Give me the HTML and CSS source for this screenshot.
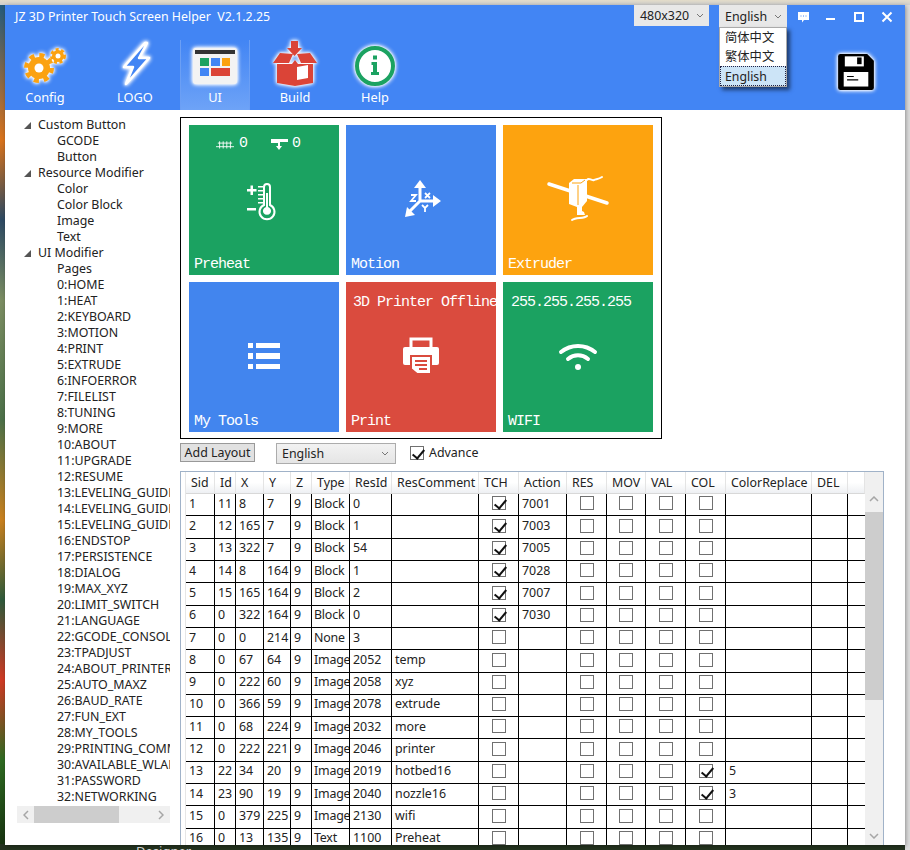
FILE: index.html
```html
<!DOCTYPE html>
<html lang="en">
<head>
<meta charset="utf-8">
<title>JZ 3D Printer Touch Screen Helper</title>
<link rel="stylesheet" href="styles.css">
</head>
<body>
<div class="desk-text">Designer</div>
<div class="window">
  <header class="header">
    <div class="titlebar">
      <div class="title">JZ 3D Printer Touch Screen Helper&nbsp; V2.1.2.25</div>
      <div class="top-controls">
        <div class="combo combo-res"><span>480x320</span><svg class="chev" viewBox="0 0 8 5"><path d="M1 1l3 3 3-3"/></svg></div>
        <div class="combo combo-lang"><span>English</span><svg class="chev" viewBox="0 0 8 5"><path d="M1 1l3 3 3-3"/></svg>
          <ul class="menu">
            <li>简体中文</li>
            <li>繁体中文</li>
            <li class="sel">English</li>
          </ul>
        </div>
        <div class="win-buttons">
          <svg class="wb" viewBox="0 0 12 12"><path class="fill-w" d="M1 1h11v8H7l-2 2.5V9H1z"/><path class="dots" d="M3.5 5h1M6 5h1M8.500 5h1"/></svg>
          <svg class="wb" viewBox="0 0 12 12"><path class="line-w" d="M1 8h9"/></svg>
          <svg class="wb" viewBox="0 0 12 12"><rect class="line-w" x="2" y="2" width="8" height="8"/></svg>
          <svg class="wb" viewBox="0 0 12 12"><path class="line-w" d="M1.500 1.500l9 9M10.500 1.500l-9 9"/></svg>
        </div>
      </div>
    </div>
    <nav class="nav">
      <div class="tab">
        <svg class="nav-icon" viewBox="0 0 46 40">
          <circle class="gear-teeth" cx="17" cy="22" r="12.500"/><circle class="gear" cx="17" cy="22" r="11"/><circle class="hole" cx="17" cy="22" r="4.500"/>
          <circle class="gear-teeth-s" cx="36" cy="10" r="6.500"/><circle class="gear" cx="36" cy="10" r="6"/><circle class="hole-s" cx="36" cy="10" r="2.500"/>
        </svg>
        <span>Config</span>
      </div>
      <div class="tab tab-logo">
        <svg class="nav-icon nav-bolt" viewBox="0 0 46 44"><path class="bolt" d="M33 1L12 25h9l-7 17 23-26H27l8-15z"/></svg>
        <span>LOGO</span>
      </div>
      <div class="tab tab-active">
        <svg class="nav-icon" viewBox="0 0 46 40">
          <rect class="ui-frame" x="1" y="2" width="44" height="36" rx="3"/>
          <rect class="ui-bar" x="3" y="4" width="40" height="4"/>
          <rect class="t-green" x="8" y="12" width="9" height="8"/><rect class="t-blue" x="19" y="12" width="9" height="8"/><rect class="t-orange" x="30" y="12" width="8" height="8"/>
          <rect class="t-blue" x="8" y="22" width="9" height="8"/><rect class="t-red" x="19" y="22" width="19" height="8"/>
        </svg>
        <span>UI</span>
      </div>
      <div class="tab">
        <svg class="nav-icon nav-build" viewBox="0 0 46 46">
          <path class="red" d="M19 0h7v7h4l-7.500 8L15 7h4z"/>
          <path class="red" d="M5 23h15l3 -4 3 4h15v19l-18 3-18-3z"/>
          <path class="red" d="M1 22l7-10 13 1-4 9zM45 22l-7-10-13 1 4 9z"/>
          <path class="white" d="M25 26l11-2v13l-11 2z"/>
        </svg>
        <span>Build</span>
      </div>
      <div class="tab">
        <svg class="nav-icon" viewBox="0 0 46 40">
          <circle class="help-ring" cx="23" cy="20" r="18"/>
          <path class="green" d="M21 9.500h4v4h-4zM19.500 16H25v10h2v3h-8v-3h2v-7h-1.500z"/>
        </svg>
        <span>Help</span>
      </div>
      <svg class="save" viewBox="0 0 34 34">
        <path class="black" d="M1 3a2 2 0 0 1 2-2h24l6 6v24a2 2 0 0 1-2 2H3a2 2 0 0 1-2-2z"/>
        <rect class="white" x="7" y="3" width="17" height="9"/><rect class="black" x="18" y="4" width="4" height="6"/>
        <rect class="white" x="6" y="17" width="22" height="13"/><path class="thin" d="M9 21h6M9 24h10"/>
      </svg>
    </nav>
  </header>
  <div class="content">
    <aside class="side">
      <div class="tree">
        <div class="node parent">Custom Button</div>
        <div class="node">GCODE</div>
        <div class="node">Button</div>
        <div class="node parent">Resource Modifier</div>
        <div class="node">Color</div>
        <div class="node">Color Block</div>
        <div class="node">Image</div>
        <div class="node">Text</div>
        <div class="node parent">UI Modifier</div>
        <div class="node">Pages</div>
        <div class="node">0:HOME</div>
        <div class="node">1:HEAT</div>
        <div class="node">2:KEYBOARD</div>
        <div class="node">3:MOTION</div>
        <div class="node">4:PRINT</div>
        <div class="node">5:EXTRUDE</div>
        <div class="node">6:INFOERROR</div>
        <div class="node">7:FILELIST</div>
        <div class="node">8:TUNING</div>
        <div class="node">9:MORE</div>
        <div class="node">10:ABOUT</div>
        <div class="node">11:UPGRADE</div>
        <div class="node">12:RESUME</div>
        <div class="node">13:LEVELING_GUIDE</div>
        <div class="node">14:LEVELING_GUIDE</div>
        <div class="node">15:LEVELING_GUIDE</div>
        <div class="node">16:ENDSTOP</div>
        <div class="node">17:PERSISTENCE</div>
        <div class="node">18:DIALOG</div>
        <div class="node">19:MAX_XYZ</div>
        <div class="node">20:LIMIT_SWITCH</div>
        <div class="node">21:LANGUAGE</div>
        <div class="node">22:GCODE_CONSOLE</div>
        <div class="node">23:TPADJUST</div>
        <div class="node">24:ABOUT_PRINTER</div>
        <div class="node">25:AUTO_MAXZ</div>
        <div class="node">26:BAUD_RATE</div>
        <div class="node">27:FUN_EXT</div>
        <div class="node">28:MY_TOOLS</div>
        <div class="node">29:PRINTING_COMMAND</div>
        <div class="node">30:AVAILABLE_WLAN</div>
        <div class="node">31:PASSWORD</div>
        <div class="node">32:NETWORKING</div>
      </div>
      <div class="hscroll">
        <svg class="sb-arrow" viewBox="0 0 6 10"><path d="M5 1L1 5l4 4"/></svg>
        <div class="hthumb"></div>
        <svg class="sb-arrow" viewBox="0 0 6 10"><path d="M1 1l4 4-4 4"/></svg>
      </div>
    </aside>
    <main class="main">
      <section class="preview">
        <div class="tile green-bg">
          <div class="status">
            <svg class="mini" viewBox="0 0 20 10"><path class="thin-w" d="M0 8h20M4 2v8M8 2v8M12 2v8M16 2v8M2 4h16"/></svg><span class="st-val">0</span>
            <svg class="mini mini-n" viewBox="0 0 17 12"><path class="fill-w" d="M0 1h17v3H9v4h2l-3 4-3-4h2V5H0z"/></svg><span>0</span>
          </div>
          <svg class="tile-icon" viewBox="0 0 40 40">
            <path class="stroke-w2" d="M20 8a3 3 0 0 1 6 0v18a7.500 7.500 0 1 1-6 0z"/>
            <path class="fill-w" d="M22 14h2v14a4 4 0 1 1-2 0zM3 10h3.500V6.500h2.500V10h3.500v2.500H9V16H6.500v-3.500H3zM3 29h9v2.500H3zM14 7h5v1.500h-5zM14 11h5v1.500h-5zM14 15h5v1.500h-5zM14 19h5v1.500h-5zM14 23h5v1.500h-5z"/>
          </svg>
          <div class="label">Preheat</div>
        </div>
        <div class="tile blue-bg">
          <svg class="tile-icon" viewBox="0 0 40 40">
            <path class="stroke-w3" d="M19 22V6M19 22h16M19 22L7 34"/>
            <path class="fill-w" d="M19 1l6 8H13zM40 22l-8 6V16zM4 38l2-10 8 8z"/>
            <path class="thin-w2" d="M10 16h5l-5 6h5M24 14l5 5M29 14l-5 5M21 26l3 3 3-3M24 29v4"/>
          </svg>
          <div class="label">Motion</div>
        </div>
        <div class="tile orange-bg">
          <svg class="tile-icon icon-ext" viewBox="0 0 60 46">
            <path class="stroke-w3r" d="M1 8l58 19"/>
            <path class="fill-w" d="M21 7l5-4h13v22l-5 6h-5l-8-3z"/>
            <path class="orange-line" d="M30 9v20M24 7h9l4-3"/>
            <path class="fill-w" d="M29 31h5v4l2 1 1 3H29z"/>
            <path class="stroke-w2" d="M24 44c4-3 12-1 15-4"/>
            <path class="stroke-w2" d="M39 4c2-3 4 1 7 0s5-1 8-3"/>
          </svg>
          <div class="label">Extruder</div>
        </div>
        <div class="tile blue-bg">
          <svg class="tile-icon" viewBox="0 0 40 40"><path class="fill-w" d="M4 7h5v5H4zM12 7h24v5H12zM4 17h5v6H4zM12 17h24v6H12zM4 28h5v5H4zM12 28h24v5H12z"/></svg>
          <div class="label">My Tools</div>
        </div>
        <div class="tile red-bg">
          <div class="top-text">3D Printer Offline</div>
          <svg class="tile-icon" viewBox="0 0 40 40">
            <path class="stroke-w3" d="M10 11V3h20v8"/>
            <rect class="fill-w" x="2" y="11" width="36" height="18" rx="2"/>
            <path class="paper" d="M10 20h20v18H16l-6-5z"/>
            <path class="red-line" d="M14 25h12M14 29h12M18 33h8"/>
          </svg>
          <div class="label">Print</div>
        </div>
        <div class="tile green-bg">
          <div class="top-text top-ip">255.255.255.255</div>
          <svg class="tile-icon" viewBox="0 0 40 40">
            <path class="stroke-w3c" d="M3 16c10-8 24-8 34 0M10 23c6-5 14-5 20 0"/><circle class="fill-w" cx="20" cy="31" r="3"/>
          </svg>
          <div class="label">WIFI</div>
        </div>
      </section>
      <div class="controls">
        <button class="add-btn">Add Layout</button>
        <div class="combo combo-layout"><span>English</span><svg class="chev" viewBox="0 0 8 5"><path d="M1 1l3 3 3-3"/></svg></div>
        <label class="adv"><i class="cb on"></i>Advance</label>
      </div>
      <div class="grid-frame">
        <div class="grid-wrap">
        <table class="grid">
          <colgroup>
            <col class="w29"><col class="w21"><col class="w28"><col class="w27"><col class="w21"><col class="w38"><col class="w42"><col class="w87"><col class="w40"><col class="w48"><col class="w40"><col class="w39"><col class="w40"><col class="w40"><col class="w86"><col class="w36"><col class="w17">
          </colgroup>
          <thead>
            <tr><th>Sid</th><th>Id</th><th>X</th><th>Y</th><th>Z</th><th>Type</th><th>ResId</th><th>ResComment</th><th>TCH</th><th>Action</th><th>RES</th><th>MOV</th><th>VAL</th><th>COL</th><th>ColorReplace</th><th>DEL</th><th></th></tr>
          </thead>
          <tbody>
            <tr><td>1</td><td>11</td><td>8</td><td>7</td><td>9</td><td>Block</td><td>0</td><td></td><td class="c"><i class="cb on"></i></td><td>7001</td><td class="c"><i class="cb"></i></td><td class="c"><i class="cb"></i></td><td class="c"><i class="cb"></i></td><td class="c"><i class="cb"></i></td><td></td><td></td><td></td></tr>
            <tr><td>2</td><td>12</td><td>165</td><td>7</td><td>9</td><td>Block</td><td>1</td><td></td><td class="c"><i class="cb on"></i></td><td>7003</td><td class="c"><i class="cb"></i></td><td class="c"><i class="cb"></i></td><td class="c"><i class="cb"></i></td><td class="c"><i class="cb"></i></td><td></td><td></td><td></td></tr>
            <tr><td>3</td><td>13</td><td>322</td><td>7</td><td>9</td><td>Block</td><td>54</td><td></td><td class="c"><i class="cb on"></i></td><td>7005</td><td class="c"><i class="cb"></i></td><td class="c"><i class="cb"></i></td><td class="c"><i class="cb"></i></td><td class="c"><i class="cb"></i></td><td></td><td></td><td></td></tr>
            <tr><td>4</td><td>14</td><td>8</td><td>164</td><td>9</td><td>Block</td><td>1</td><td></td><td class="c"><i class="cb on"></i></td><td>7028</td><td class="c"><i class="cb"></i></td><td class="c"><i class="cb"></i></td><td class="c"><i class="cb"></i></td><td class="c"><i class="cb"></i></td><td></td><td></td><td></td></tr>
            <tr><td>5</td><td>15</td><td>165</td><td>164</td><td>9</td><td>Block</td><td>2</td><td></td><td class="c"><i class="cb on"></i></td><td>7007</td><td class="c"><i class="cb"></i></td><td class="c"><i class="cb"></i></td><td class="c"><i class="cb"></i></td><td class="c"><i class="cb"></i></td><td></td><td></td><td></td></tr>
            <tr><td>6</td><td>0</td><td>322</td><td>164</td><td>9</td><td>Block</td><td>0</td><td></td><td class="c"><i class="cb on"></i></td><td>7030</td><td class="c"><i class="cb"></i></td><td class="c"><i class="cb"></i></td><td class="c"><i class="cb"></i></td><td class="c"><i class="cb"></i></td><td></td><td></td><td></td></tr>
            <tr><td>7</td><td>0</td><td>0</td><td>214</td><td>9</td><td>None</td><td>3</td><td></td><td class="c"><i class="cb"></i></td><td></td><td class="c"><i class="cb"></i></td><td class="c"><i class="cb"></i></td><td class="c"><i class="cb"></i></td><td class="c"><i class="cb"></i></td><td></td><td></td><td></td></tr>
            <tr><td>8</td><td>0</td><td>67</td><td>64</td><td>9</td><td>Image</td><td>2052</td><td>temp</td><td class="c"><i class="cb"></i></td><td></td><td class="c"><i class="cb"></i></td><td class="c"><i class="cb"></i></td><td class="c"><i class="cb"></i></td><td class="c"><i class="cb"></i></td><td></td><td></td><td></td></tr>
            <tr><td>9</td><td>0</td><td>222</td><td>60</td><td>9</td><td>Image</td><td>2058</td><td>xyz</td><td class="c"><i class="cb"></i></td><td></td><td class="c"><i class="cb"></i></td><td class="c"><i class="cb"></i></td><td class="c"><i class="cb"></i></td><td class="c"><i class="cb"></i></td><td></td><td></td><td></td></tr>
            <tr><td>10</td><td>0</td><td>366</td><td>59</td><td>9</td><td>Image</td><td>2078</td><td>extrude</td><td class="c"><i class="cb"></i></td><td></td><td class="c"><i class="cb"></i></td><td class="c"><i class="cb"></i></td><td class="c"><i class="cb"></i></td><td class="c"><i class="cb"></i></td><td></td><td></td><td></td></tr>
            <tr><td>11</td><td>0</td><td>68</td><td>224</td><td>9</td><td>Image</td><td>2032</td><td>more</td><td class="c"><i class="cb"></i></td><td></td><td class="c"><i class="cb"></i></td><td class="c"><i class="cb"></i></td><td class="c"><i class="cb"></i></td><td class="c"><i class="cb"></i></td><td></td><td></td><td></td></tr>
            <tr><td>12</td><td>0</td><td>222</td><td>221</td><td>9</td><td>Image</td><td>2046</td><td>printer</td><td class="c"><i class="cb"></i></td><td></td><td class="c"><i class="cb"></i></td><td class="c"><i class="cb"></i></td><td class="c"><i class="cb"></i></td><td class="c"><i class="cb"></i></td><td></td><td></td><td></td></tr>
            <tr><td>13</td><td>22</td><td>34</td><td>20</td><td>9</td><td>Image</td><td>2019</td><td>hotbed16</td><td class="c"><i class="cb"></i></td><td></td><td class="c"><i class="cb"></i></td><td class="c"><i class="cb"></i></td><td class="c"><i class="cb"></i></td><td class="c"><i class="cb on"></i></td><td>5</td><td></td><td></td></tr>
            <tr><td>14</td><td>23</td><td>90</td><td>19</td><td>9</td><td>Image</td><td>2040</td><td>nozzle16</td><td class="c"><i class="cb"></i></td><td></td><td class="c"><i class="cb"></i></td><td class="c"><i class="cb"></i></td><td class="c"><i class="cb"></i></td><td class="c"><i class="cb on"></i></td><td>3</td><td></td><td></td></tr>
            <tr><td>15</td><td>0</td><td>379</td><td>225</td><td>9</td><td>Image</td><td>2130</td><td>wifi</td><td class="c"><i class="cb"></i></td><td></td><td class="c"><i class="cb"></i></td><td class="c"><i class="cb"></i></td><td class="c"><i class="cb"></i></td><td class="c"><i class="cb"></i></td><td></td><td></td><td></td></tr>
            <tr><td>16</td><td>0</td><td>13</td><td>135</td><td>9</td><td>Text</td><td>1100</td><td>Preheat</td><td class="c"><i class="cb"></i></td><td></td><td class="c"><i class="cb"></i></td><td class="c"><i class="cb"></i></td><td class="c"><i class="cb"></i></td><td class="c"><i class="cb"></i></td><td></td><td></td><td></td></tr>
          </tbody>
        </table>
        </div>
        <div class="vscroll">
          <svg class="sb-arrow-v" viewBox="0 0 10 6"><path d="M1 5l4-4 4 4"/></svg>
          <div class="vthumb"></div>
          <svg class="sb-arrow-v" viewBox="0 0 10 6"><path d="M1 1l4 4 4-4"/></svg>
        </div>
      </div>
    </main>
  </div>
</div>
</body>
</html>
```
FILE: styles.css
```css
* { box-sizing: border-box; }
html, body { margin: 0; height: 850px; overflow: hidden; }
body {
  font-family: "Noto Sans", "Noto Sans CJK SC", sans-serif;
  font-size: 12.400px;
  color: #222;
  position: relative;
  padding: 5px;
  background:
    linear-gradient(#e3dcc9 0, #cfcfcf 5px, transparent 5px),
    linear-gradient(to left, #dcdcdc 5px, transparent 5px),
    linear-gradient(to top, #24331f 6px, transparent 6px),
    linear-gradient(#1d5a80 0, #d9731c 140px, #2d4a63 220px, #7b8d62 300px, #4c7048 420px, #c9801e 520px, #2f5a3b 600px, #d03a24 680px, #2f6b22 760px, #16300f 850px);
}
.desk-text { position: absolute; left: 136px; top: 842px; font-size: 13px; color: #ddd; }
.window { position: relative; width: 900px; height: 840px; background: #fff; display: flex; flex-direction: column; box-shadow: 1px 1px 4px rgba(0,0,0,.35); }

.header { height: 105px; background: #4285f4; color: #fff; display: flex; flex-direction: column; flex: none; }
.titlebar { height: 35px; display: flex; justify-content: space-between; align-items: flex-start; padding: 0 12px 0 10px; }
.title { margin-top: 3px; line-height: 18px; }
.top-controls { display: flex; }
.combo { display: flex; align-items: center; justify-content: space-between; background: #e8e8e8; color: #222; position: relative; }
.chev { width: 8px; height: 5px; fill: none; stroke: #777; stroke-width: 1; }
.combo-res { width: 75px; height: 21px; padding: 0 5px 0 6px; margin-right: 10px; }
.combo-lang { width: 68px; height: 22px; padding: 0 5px 0 6px; margin-right: 10px; }
.menu { list-style: none; margin: 0; padding: 0; position: absolute; left: 0; top: 22px; width: 68px; height: 60px; background: #fff; border: 1px solid #aaa; box-shadow: 3px 3px 4px rgba(0,0,0,.55); z-index: 5; }
.menu li { height: 19px; line-height: 19px; padding-left: 5px; font-size: 12.300px; }
.menu .sel { background: #cce4f7; outline: 1px dotted #224; outline-offset: -1px; height: 20px; line-height: 21px; }
.win-buttons { display: flex; gap: 16px; margin-top: 6px; }
.wb { width: 12px; height: 12px; }
.fill-w { fill: #fff; }
.dots { stroke: #4285f4; stroke-width: 1; fill: none; }
.line-w { stroke: #fff; stroke-width: 2; fill: none; }

.nav { flex: 1; display: flex; gap: 10px; padding-left: 5px; position: relative; }
.tab { width: 70px; display: flex; flex-direction: column; align-items: center; justify-content: flex-end; height: 70px; padding-bottom: 5px; }
.tab span { line-height: 16px; margin-top: 2px; font-size: 12.800px; }
.tab-logo { margin-left: 10px; }
.tab-active { background: linear-gradient(#4285f4, #6ea3f7); box-shadow: inset 1px 0 0 #6b9ff5, inset -1px 0 0 #6b9ff5; }
.nav-icon { width: 46px; height: 42px; overflow: visible; filter: drop-shadow(0 0 2px #fff) drop-shadow(0 0 1px #fff); }
.nav-build { height: 46px; margin-top: -4px; }
.nav-bolt { margin-top: -3px; height: 44px; margin-bottom: 1px; }
.gear { fill: #fba211; }
.gear-teeth { fill: none; stroke: #fba211; stroke-width: 5; stroke-dasharray: 5 4.8; }
.gear-teeth-s { fill: none; stroke: #fba211; stroke-width: 3; stroke-dasharray: 3 2.500; }
.hole { fill: #fff; }
.hole-s { fill: #fff; }
.bolt { fill: #4285f4; stroke: #fff; stroke-width: 2.500; stroke-linejoin: round; }
.ui-frame { fill: #f3f3f3; }
.ui-bar { fill: #333; }
.t-green { fill: #1ba261; }
.t-blue { fill: #4285f4; }
.t-orange { fill: #fba211; }
.t-red { fill: #db4437; }
.red { fill: #db4437; }
.white { fill: #fff; }
.help-ring { fill: #fff; stroke: #1ba261; stroke-width: 4; }
.green { fill: #1ba261; }
.save { position: absolute; right: 30px; top: 13px; width: 38px; height: 38px; filter: drop-shadow(0 0 2px #fff) drop-shadow(0 0 1px #fff); }
.black { fill: #000; }
.thin { stroke: #000; stroke-width: 1; fill: none; }

.content { flex: 1; display: flex; min-height: 0; }
.side { width: 175px; flex: none; padding: 7px 10px 0 12px; }
.tree { height: 689px; overflow: hidden; }
.node { height: 16px; line-height: 16px; padding-left: 40px; white-space: nowrap; }
.parent { padding-left: 21px; position: relative; }
.parent::before { content: ""; position: absolute; left: 7px; top: 5px; border-style: solid; border-width: 0 0 7px 7px; border-color: transparent transparent #555 transparent; }
.hscroll { height: 17px; background: #f0f0f0; display: flex; align-items: center; justify-content: space-between; position: relative; padding: 0 6px; }
.hthumb { position: absolute; left: 17px; top: 0; width: 85px; height: 17px; background: #cdcdcd; }
.sb-arrow { width: 6px; height: 10px; fill: none; stroke: #a6a6a6; stroke-width: 1.500; }

.main { flex: 1; min-width: 0; padding-top: 7px; display: flex; flex-direction: column; }
.preview { width: 482px; height: 322px; border: 1px solid #000; padding: 7px 8px; display: grid; grid-template-columns: repeat(3, 150px); grid-auto-rows: 150px; gap: 7px; }
.tile { position: relative; color: #fff; font-family: "Liberation Mono", monospace; font-size: 15px; letter-spacing: -1px; overflow: hidden; display: flex; align-items: center; justify-content: center; }
.green-bg { background: #1ba261; }
.blue-bg { background: #4285ee; }
.orange-bg { background: #fda30f; }
.red-bg { background: #da4b3e; }
.tile-icon { width: 40px; height: 40px; margin-top: -3px; overflow: visible; }
.icon-ext { width: 60px; height: 46px; margin-top: -3px; }
.label { position: absolute; left: 5px; bottom: 1px; line-height: 18px; }
.status { position: absolute; left: 27px; top: 10px; display: flex; align-items: center; line-height: 18px; font-size: 15px; }
.mini { width: 18px; height: 10px; }
.mini-n { width: 17px; height: 12px; margin-left: 24px; }
.st-val { margin-left: 5px; }
.mini-n + span { margin-left: 4px; }
.thin-w { stroke: #fff; stroke-width: 1; fill: none; }
.stroke-w2 { stroke: #fff; stroke-width: 2; fill: none; stroke-linecap: round; }
.stroke-w3 { stroke: #fff; stroke-width: 3; fill: none; }
.stroke-w3r { stroke: #fff; stroke-width: 3.500; fill: none; stroke-linecap: round; }
.stroke-w3c { stroke: #fff; stroke-width: 4; fill: none; stroke-linecap: round; }
.thin-w2 { stroke: #fff; stroke-width: 1.800; fill: none; }
.orange-line { stroke: #fda30f; stroke-width: 1; fill: none; }
.paper { fill: #fff; stroke: #da4b3e; stroke-width: 2; }
.red-line { stroke: #da4b3e; stroke-width: 2; fill: none; }
.top-text { position: absolute; left: 7px; top: 12px; line-height: 18px; white-space: nowrap; }
.top-ip { left: 8px; }

.controls { height: 21px; margin-top: 4px; display: flex; align-items: flex-start; flex: none; }
.add-btn { width: 75px; height: 19px; padding: 0; background: #e1e1e1; border: 1px solid #999; font: inherit; line-height: 16px; color: #222; }
.combo-layout { width: 120px; height: 21px; margin-left: 21px; background: linear-gradient(#f2f2f2, #e5e5e5); border: 1px solid #acacac; padding: 0 6px 0 5px; }
.adv { display: flex; align-items: center; margin-left: 14px; height: 19px; gap: 5px; }

.cb { display: inline-block; width: 14px; height: 14px; border: 1px solid #707070; background: #fff; position: relative; vertical-align: middle; }
.cb.on::after { content: ""; position: absolute; left: 4px; top: 0; width: 5px; height: 10px; border: solid #111; border-width: 0 2px 2px 0; transform: rotate(40deg); }

.grid-frame { margin-top: 7px; flex: 1; min-height: 0; border: 1px solid #a0b2c8; border-bottom: 0; width: 704px; display: flex; background: #fff; }
.grid-wrap { flex: none; width: 684px; padding-left: 5px; overflow: hidden; background: linear-gradient(to right, #fff 4px, #e6e6e6 4px, #e6e6e6 5px); }
.grid { table-layout: fixed; width: 679px; border-collapse: separate; border-spacing: 0; background: #fff; }
.w17 { width: 17px; } .w21 { width: 21px; } .w27 { width: 27px; } .w28 { width: 28px; } .w29 { width: 29px; }
.w36 { width: 36px; } .w38 { width: 38px; } .w39 { width: 39px; } .w40 { width: 40px; } .w42 { width: 42px; }
.w48 { width: 48px; } .w86 { width: 86px; } .w87 { width: 87px; }
.grid th { height: 22px; font-weight: 400; text-align: left; padding: 0 0 0 5px; white-space: nowrap; overflow: hidden; background: linear-gradient(#fff 50%, #eef0f3); border-right: 1px solid #e4e4e4; border-bottom: 1px solid #d8d8d8; }
.grid td { height: 22.320px; padding: 0 0 2px 3px; white-space: nowrap; overflow: hidden; border-right: 1px solid #000; border-bottom: 1px solid #000; line-height: 16px; }
.grid td:nth-child(6) { padding-left: 2px; letter-spacing: -.2px; }
.grid td:last-child { border-right: 0; }
.grid td.c { text-align: center; padding: 0 0 4px; }
.vscroll { width: 18px; flex: none; background: #f0f0f0; display: flex; flex-direction: column; align-items: center; position: relative; }
.vthumb { width: 18px; height: 188px; background: #cdcdcd; margin-top: 10px; flex: none; }
.sb-arrow-v { width: 10px; height: 6px; fill: none; stroke: #a6a6a6; stroke-width: 1.500; flex: none; }
.vscroll .sb-arrow-v:first-child { margin-top: 24px; }
.vscroll .sb-arrow-v:last-child { position: absolute; bottom: 6px; }
```
